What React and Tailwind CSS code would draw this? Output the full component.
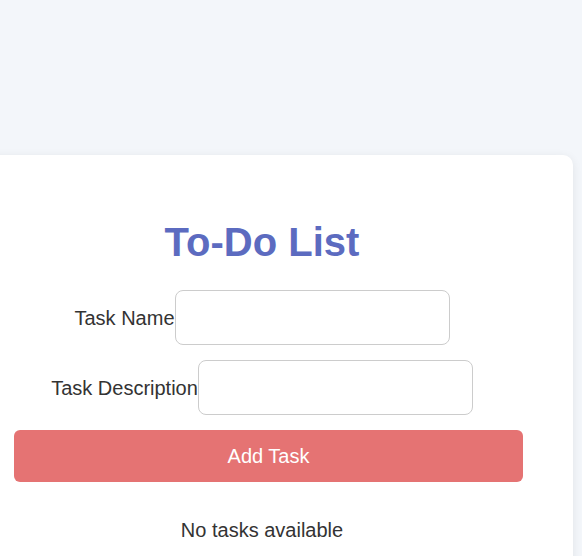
import React from "react";

export default function App() {
  return (
    <div
      className="min-h-[556px] w-full overflow-hidden bg-[#f3f6fa] pt-[155px] text-[#333]"
      style={{ fontFamily: '"Liberation Sans", Arial, sans-serif' }}
    >
      <div className="ml-[-49px] w-[622px] min-h-[420px] rounded-[10px] bg-white shadow-[0_2px_10px_rgba(0,0,0,0.08)] pt-[63px]">
        <h1 className="text-center text-[40px] font-bold leading-[48px] text-[#5c6bc0]">
          To-Do List
        </h1>
        <div className="mt-[24px] flex flex-col gap-[15px]">
          <div className="flex items-center justify-center">
            <label className="text-[20px]">Task Name</label>
            <input
              type="text"
              className="h-[55px] w-[275px] rounded-lg border border-[#ccc] bg-white px-3 outline-none"
            />
          </div>
          <div className="flex items-center justify-center">
            <label className="text-[20px]">Task Description</label>
            <input
              type="text"
              className="h-[55px] w-[275px] rounded-lg border border-[#ccc] bg-white px-3 outline-none"
            />
          </div>
          <div className="pl-[63px]">
            <button className="flex h-[52px] w-[509px] items-center justify-center rounded-md bg-[#e57373] text-[20px] text-white">
              Add Task
            </button>
          </div>
        </div>
        <p className="mt-[37px] text-center text-[20px] leading-[23px]">
          No tasks available
        </p>
      </div>
    </div>
  );
}
